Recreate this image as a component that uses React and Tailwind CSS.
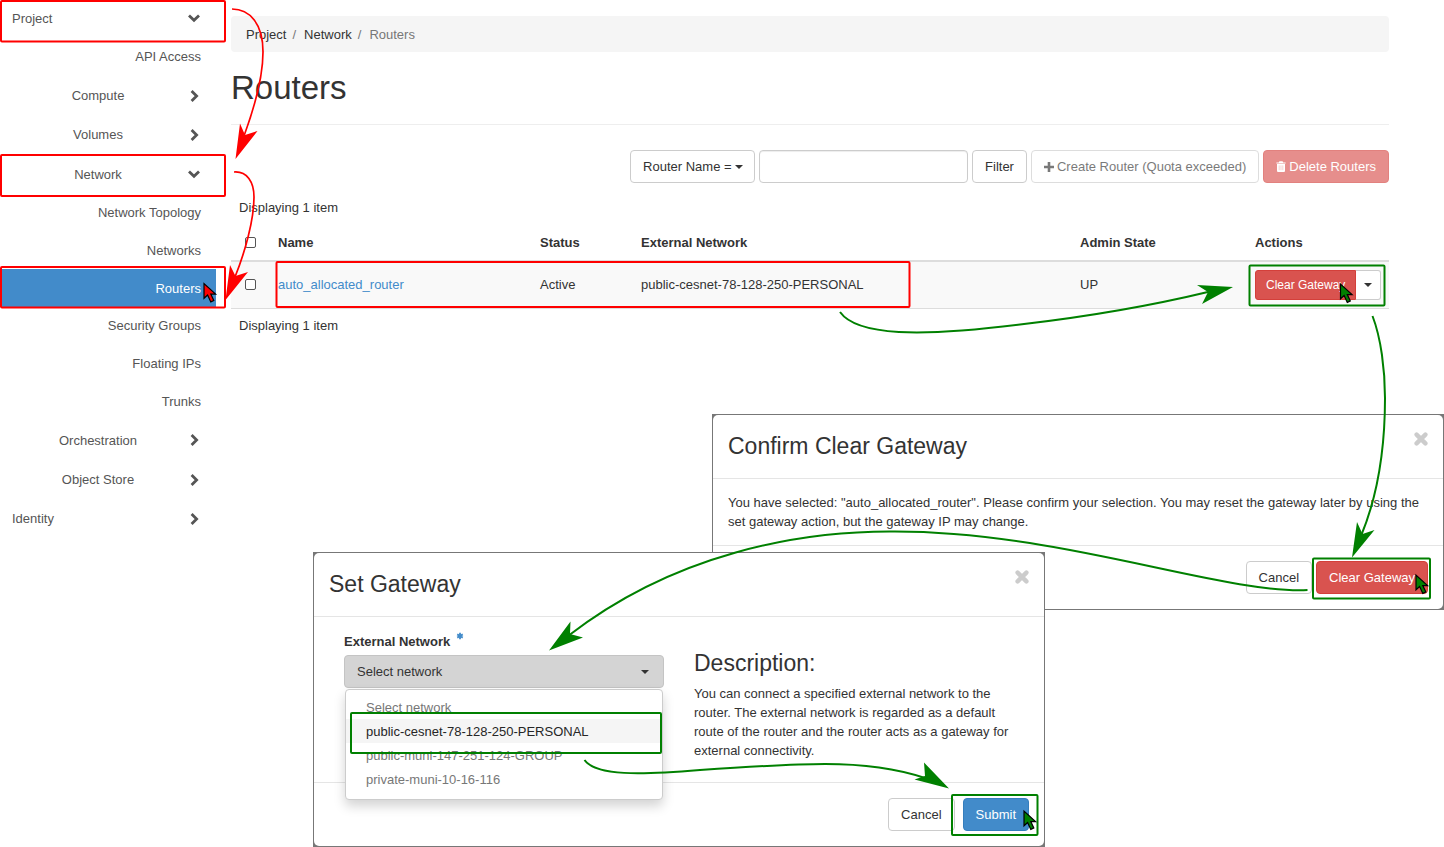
import React from "react";

const leaves = [
  "Network Topology",
  "Networks",
  "Routers",
  "Security Groups",
  "Floating IPs",
  "Trunks",
];

function Chevron({ down }) {
  return (
    <svg viewBox="0 0 12 12" className="h-3 w-3 shrink-0" fill="none" stroke="currentColor" strokeWidth="2.8">
      {down ? <path d="M1 3.4 6 8.2 11 3.4" /> : <path d="M3.6 1 8.6 6 3.6 11" />}
    </svg>
  );
}

function Caret({ className = "" }) {
  return (
    <svg viewBox="0 0 8 4" className={`h-1 w-2 shrink-0 ${className}`} fill="currentColor">
      <path d="M0 0h8L4 4z" />
    </svg>
  );
}

function Plus() {
  return (
    <svg viewBox="0 0 10 10" className="size-[10px] shrink-0" stroke="currentColor" strokeWidth="2.6">
      <path d="M5 0v10M0 5h10" />
    </svg>
  );
}

function Trash() {
  return (
    <svg viewBox="0 0 10 11" className="h-[11px] w-[10px] shrink-0">
      <path
        d="M3 .9Q3.1.2 3.8.2h2.4Q6.9.2 7 .9L7.2 1.5H9.6V2.6H.4V1.5H2.8ZM1 3H9V9.8Q9 11 8 11H2Q1 11 1 9.8Z"
        fill="currentColor"
      />
      <path d="M3.2 4.4V9.2M5 4.4V9.2M6.8 4.4V9.2" stroke="#e9908d" strokeWidth="0.6" />
    </svg>
  );
}

function Cross() {
  return (
    <svg viewBox="0 0 14 14" className="size-[14px]" stroke="currentColor" strokeWidth="4.4" strokeLinecap="round">
      <path d="M2.6 2.6 11.4 11.4M11.4 2.6 2.6 11.4" />
    </svg>
  );
}

function Group({ label, open, top, className }) {
  return (
    <button
      type="button"
      aria-expanded={Boolean(open)}
      className={`flex w-full items-center pr-4 ${top ? "pl-3" : "pl-2"} ${className}`}
    >
      <span className={`flex-1 ${top ? "text-left" : "text-center"}`}>{label}</span>
      <Chevron down={open} />
    </button>
  );
}

function Leaf({ label, active, className = "" }) {
  return (
    <a
      href="#"
      className={`flex items-center justify-end pr-[15px] ${active ? "bg-[#428bca] text-white" : ""} ${className}`}
    >
      {label}
    </a>
  );
}

function Sidebar() {
  return (
    <nav className="w-[216px] shrink-0 text-[#555]">
      <Group label="Project" top open className="h-9" />
      <Leaf label="API Access" className="h-10" />
      <Group label="Compute" className="h-[39px]" />
      <Group label="Volumes" className="h-[39px]" />
      <Group label="Network" open className="h-10" />
      <div className="grid h-[226px] auto-rows-fr">
        {leaves.map((l) => (
          <Leaf key={l} label={l} active={l === "Routers"} />
        ))}
      </div>
      <Group label="Orchestration" className="h-10" />
      <Group label="Object Store" className="h-[39px]" />
      <Group label="Identity" top className="h-[39px]" />
    </nav>
  );
}

const btn = "flex h-[33px] items-center whitespace-nowrap rounded border px-3";

function Toolbar() {
  return (
    <div className="mt-[25px] flex justify-end gap-1">
      <div className="relative flex items-center">
        <select
          aria-label="Filter field"
          className="h-[33px] w-[125px] appearance-none rounded border border-[#ccc] bg-white px-3"
        >
          <option>Router Name =</option>
        </select>
        <Caret className="pointer-events-none absolute right-3" />
      </div>
      <input
        type="text"
        aria-label="Filter value"
        className="h-[33px] w-[209px] rounded border border-[#ccc] px-3 shadow-[inset_0_1px_1px_rgba(0,0,0,0.075)]"
      />
      <button type="button" className={`${btn} border-[#ccc] bg-white`}>
        Filter
      </button>
      <button type="button" disabled className={`${btn} gap-[3px] border-[#ccc] bg-white opacity-65`}>
        <Plus />
        Create Router (Quota exceeded)
      </button>
      <button type="button" disabled className={`${btn} gap-[3px] border-[#d43f3a] bg-[#d9534f] text-white opacity-65`}>
        <Trash />
        Delete Routers
      </button>
    </div>
  );
}

function Check({ label }) {
  return (
    <input
      type="checkbox"
      aria-label={label}
      className="ml-[6px] block size-[11px] appearance-none rounded-[2px] border border-[#555] bg-white"
    />
  );
}

function RoutersTable() {
  return (
    <table className="mt-2 w-full table-fixed border-collapse text-left">
      <thead>
        <tr className="h-9 border-b-2 border-[#ddd]">
          <th className="w-[39px] px-2"><Check label="Select all" /></th>
          <th className="w-[262px] px-2">Name</th>
          <th className="w-[101px] px-2">Status</th>
          <th className="px-2">External Network</th>
          <th className="w-[175px] px-2">Admin State</th>
          <th className="w-[142px] px-2">Actions</th>
        </tr>
      </thead>
      <tbody>
        <tr className="h-[47px] border-b border-[#ddd] bg-[#f9f9f9]">
          <td className="px-2"><Check label="Select auto_allocated_router" /></td>
          <td className="px-2"><a href="#" className="text-[#428bca]">auto_allocated_router</a></td>
          <td className="px-2">Active</td>
          <td className="px-2">public-cesnet-78-128-250-PERSONAL</td>
          <td className="px-2">UP</td>
          <td className="px-2">
            <div className="flex h-[30px] text-xs">
              <button type="button" className="rounded-l-[3px] border border-[#d43f3a] bg-[#d9534f] px-[10px] whitespace-nowrap text-white">
                Clear Gateway
              </button>
              <button type="button" aria-label="More actions" className="rounded-r-[3px] border border-l-0 border-[#ccc] bg-white px-2">
                <Caret />
              </button>
            </div>
          </td>
        </tr>
      </tbody>
    </table>
  );
}

function Modal({ title, children, footer, className }) {
  return (
    <section role="dialog" aria-label={title} className={`absolute w-[732px] bg-[#777] p-px ${className}`}>
      <div className="rounded-[5px] bg-white">
        <header className="flex h-16 items-center justify-between border-b border-[#e5e5e5] px-[15px]">
          <h2 className="text-[23px]">{title}</h2>
          <button type="button" aria-label="Close" className="mb-4 text-[#ccc]">
            <Cross />
          </button>
        </header>
        {children}
        <footer className="flex justify-end border-t border-[#e5e5e5] p-[15px]">{footer}</footer>
      </div>
    </section>
  );
}

const networks = [
  "Select network",
  "public-cesnet-78-128-250-PERSONAL",
  "public-muni-147-251-124-GROUP",
  "private-muni-10-16-116",
];

function Cursor({ x, y, fill }) {
  return (
    <path
      transform={`translate(${x} ${y})`}
      d="M0 0V14.8L3.6 11.6 6.8 18.4 9.8 17 6.8 10.6H11.6Z"
      fill={fill}
      stroke="#000"
      strokeWidth="1.2"
    />
  );
}

function Annotations() {
  return (
    <svg
      width="1444"
      height="847"
      viewBox="0 0 1444 847"
      className="pointer-events-none absolute top-0 left-0"
      aria-hidden="true"
    >
      <g fill="none" strokeWidth="2">
        <g stroke="#f00">
          <rect x="1" y="1" width="224" height="40.5" rx="1" />
          <rect x="1" y="155" width="224" height="41" rx="1" />
          <rect x="1" y="267" width="224" height="40.5" rx="1" />
          <rect x="276.5" y="262" width="633" height="45" rx="1" />
          <path strokeWidth="1.7" d="M232 9C250 9 263 24 263 52C263 77 255 106 244 136" />
          <path strokeWidth="1.7" d="M234 172C247 171 254 182 254 197C254 220 245 252 235 277" />
        </g>
        <g stroke="#008000">
          <rect x="1249.5" y="265.5" width="135" height="40" rx="1" />
          <rect x="1313" y="558.5" width="117" height="40" rx="1" />
          <rect x="351" y="713" width="310" height="40" rx="1" />
          <rect x="952" y="795" width="85.5" height="40" rx="1" />
          <path d="M840 312C857 336 920 337 1020 324.5C1085 317 1150 306 1210 291.5" />
          <path d="M1372.5 316C1381 338 1385 370 1385 398C1385 445 1378 495 1361 536" />
          <path d="M1307.5 590C1220 594 1060 531 893 531.5C800 531 675 553 568 636" />
          <path d="M584.5 760C596 776 640 775 700 770C760 766 790 764 825 764C865 764 895 768 925 778" />
        </g>
      </g>
      <g fill="#f00">
        <path d="M235.5 159 240 123.5 245 135 257.5 131Z" />
        <path d="M225.5 300 230 265 235.5 276 248 272Z" />
      </g>
      <g fill="#008000">
        <path d="M1233 287 1197 285 1208 292 1202 304Z" />
        <path d="M1352 557.5 1357 522 1362.5 534 1374.5 530Z" />
        <path d="M549 650.5 570.5 621.5 570 634 583 637.5Z" />
        <path d="M949 788.5 924 762.5 925 776 914.5 779.5Z" />
      </g>
      <Cursor x={204} y={283.5} fill="#f00" />
      <Cursor x={1340.5} y={284} fill="#008000" />
      <Cursor x={1416} y={575} fill="#008000" />
      <Cursor x={1024} y={811} fill="#008000" />
    </svg>
  );
}

export default function App() {
  return (
    <div className="relative min-h-screen overflow-hidden bg-white font-['Liberation_Sans',Arial,sans-serif] text-[13px] leading-[19px] text-[#333]">
      <div className="flex">
        <Sidebar />
        <main className="min-w-0 flex-1 pt-4 pr-[55px] pl-[15px]">
          <ol className="flex h-9 items-center rounded bg-[#f5f5f5] px-[15px]">
            <li><a href="#">Project</a></li>
            <li className="px-[6px] text-[#777]">/</li>
            <li className="pl-[2px]"><a href="#">Network</a></li>
            <li className="px-[6px] text-[#777]">/</li>
            <li className="pl-[2px] text-[#777]">Routers</li>
          </ol>
          <h1 className="mt-[18px] border-b border-[#eee] pb-[18px] text-[33px] leading-9">Routers</h1>
          <Toolbar />
          <p className="mt-[15px] px-2">Displaying 1 item</p>
          <RoutersTable />
          <p className="mt-[7px] px-2">Displaying 1 item</p>
        </main>
      </div>

      <Modal
        title="Confirm Clear Gateway"
        className="top-[414px] left-[712px]"
        footer={
          <div className="flex gap-1">
            <button type="button" className={`${btn} border-[#ccc] bg-white`}>Cancel</button>
            <button type="button" className={`${btn} border-[#d43f3a] bg-[#d9534f] text-white`}>Clear Gateway</button>
          </div>
        }
      >
        <p className="px-[15px] py-[14px]">
          You have selected: "auto_allocated_router". Please confirm your selection. You may reset the gateway later by
          using the set gateway action, but the gateway IP may change.
        </p>
      </Modal>

      <Modal
        title="Set Gateway"
        className="top-[552px] left-[313px]"
        footer={
          <div className="flex gap-2">
            <button type="button" className={`${btn} border-[#ccc] bg-white`}>Cancel</button>
            <button type="submit" className={`${btn} border-[#357ebd] bg-[#428bca] text-white`}>Submit</button>
          </div>
        }
      >
        <div className="grid grid-cols-2 gap-[30px] px-[30px] pt-[15px] pb-[22px]">
          <div>
            <label htmlFor="network" className="flex gap-[6px] font-bold">
              External Network
              <svg viewBox="0 0 8 8" className="size-2 text-[#428bca]" stroke="currentColor" strokeWidth="1.8">
                <path d="M4 .8v6.4M1.2 2.4l5.6 3.2M6.8 2.4l-5.6 3.2" />
              </svg>
            </label>
            <div className="relative mt-1">
              <select
                id="network"
                className="block h-[33px] w-full appearance-none rounded border border-[#c4c4c4] bg-[#d4d4d4] px-3"
              >
                {networks.map((n) => (
                  <option key={n}>{n}</option>
                ))}
              </select>
              <Caret className="pointer-events-none absolute top-[15px] right-[15px]" />
              <ul
                role="listbox"
                aria-label="External Network"
                className="absolute inset-x-px top-[34px] rounded border border-[#ccc] bg-white pt-[5px] pb-2 text-[#777] shadow-[0_6px_12px_rgba(0,0,0,0.175)]"
              >
                {networks.map((n, i) => (
                  <li
                    key={n}
                    role="option"
                    aria-selected={i === 1}
                    className={`flex h-6 items-center px-5 ${i === 1 ? "bg-[#f5f5f5] text-[#262626]" : ""}`}
                  >
                    {n}
                  </li>
                ))}
              </ul>
            </div>
          </div>
          <div className="pt-[19px]">
            <h3 className="text-[23px] leading-[25px]">Description:</h3>
            <p className="mt-2">
              You can connect a specified external network to the router. The external network is regarded as a default
              route of the router and the router acts as a gateway for external connectivity.
            </p>
          </div>
        </div>
      </Modal>

      <Annotations />
    </div>
  );
}
